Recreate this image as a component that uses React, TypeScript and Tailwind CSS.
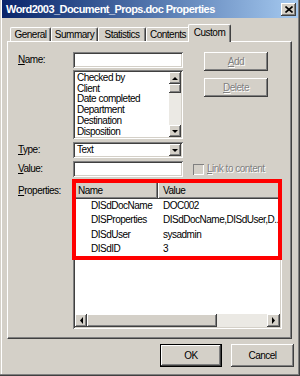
import React from "react";

const raised =
  "shadow-[inset_-1px_-1px_0_#404040,inset_1px_1px_0_#ffffff,inset_-2px_-2px_0_#808080,inset_2px_2px_0_#d4d0c8]";
const sunken =
  "shadow-[inset_1px_1px_0_#808080,inset_-1px_-1px_0_#ffffff,inset_2px_2px_0_#404040,inset_-2px_-2px_0_#d4d0c8]";

function Arrow({ dir, disabled }: { dir: "up" | "down" | "left" | "right"; disabled?: boolean }) {
  const pts: Record<string, string> = {
    up: "1,4 4,1 7,4",
    down: "1,1 7,1 4,4",
    left: "4,0 4,7 1,3.5",
    right: "1,0 1,7 4,3.5",
  };
  const w = dir === "up" || dir === "down" ? 8 : 5;
  const h = dir === "up" || dir === "down" ? 5 : 7;
  return (
    <svg width={w} height={h} viewBox={`0 0 ${w} ${h}`}>
      <polygon points={pts[dir]} fill={disabled ? "#808080" : "#000"} />
    </svg>
  );
}

function ScrollBtn({ dir, cls }: { dir: "up" | "down" | "left" | "right"; cls: string }) {
  return (
    <div className={`${cls} bg-[#d4d0c8] ${raised} flex items-center justify-center shrink-0`}>
      <Arrow dir={dir} />
    </div>
  );
}

function U({ children }: { children: React.ReactNode }) {
  return <span className="underline underline-offset-[1px]">{children}</span>;
}

const dis = "text-[#808080] [text-shadow:1px_1px_0_#ffffff]";

export default function App() {
  const items = ["Checked by", "Client", "Date completed", "Department", "Destination", "Disposition"];
  const props = [
    ["DISdDocName", "DOC002"],
    ["DISProperties", "DISdDocName,DISdUser,D.."],
    ["DISdUser", "sysadmin"],
    ["DISdID", "3"],
  ];
  return (
    <div
      className={`w-[300px] h-[376px] bg-[#d4d0c8] flex flex-col px-[2px] text-[10px] tracking-[-0.5px] leading-none text-black overflow-hidden shadow-[inset_-1px_-1px_0_#404040,inset_-2px_-2px_0_#808080,inset_1px_0_0_#d4d0c8,inset_2px_0_0_#ffffff]`}
      style={{ fontFamily: '"Liberation Sans", Arial, sans-serif' }}
    >
      {/* Title bar */}
      <div className="h-[18px] shrink-0 flex items-center bg-gradient-to-r from-[#0a246a] to-[#a6caf0] pl-[4px] pr-[2px]">
        <span className="text-white font-bold text-[11px] tracking-[-0.55px]">
          Word2003_Document_Props.doc Properties
        </span>
        <div className={`ml-auto w-[15px] h-[13px] bg-[#d4d0c8] ${raised} flex items-center justify-center`}>
          <svg width="8" height="7" viewBox="0 0 8 7">
            <path d="M0.5 0.5 L7.5 6.5 M7.5 0.5 L0.5 6.5" stroke="#000" strokeWidth="1.6" />
          </svg>
        </div>
      </div>

      {/* Tabs */}
      <div className="h-[23px] shrink-0 flex items-end pl-[8px] relative z-10">
        {[
          ["General", 41],
          ["Summary", 47],
          ["Statistics", 48],
          ["Contents", 44],
        ].map(([t, w]) => (
          <div
            key={t as string}
            style={{ width: w as number }}
            className="h-[14px] rounded-t-[2px] border-t border-l border-white border-r border-r-[#404040] shadow-[inset_-1px_0_0_#808080] flex items-center justify-center"
          >
            {t}
          </div>
        ))}
        <div className="w-[43px] h-[18px] -mb-px -ml-[2px] bg-[#d4d0c8] rounded-t-[2px] border-t border-l border-white border-r border-r-[#404040] shadow-[inset_-1px_0_0_#808080] flex items-center justify-center pb-[2px]">
          Custom
        </div>
      </div>

      {/* Panel */}
      <div className="ml-[5px] w-[285px] h-[298px] shrink-0 border border-t-white border-l-white border-r-[#404040] border-b-[#404040] shadow-[inset_-1px_-1px_0_#808080] pt-[10px] pl-[10px] flex flex-col">
        {/* Row 1 */}
        <div className="flex">
          <div className="w-[55px] h-[16px] flex items-center">
            <span><U>N</U>ame:</span>
          </div>
          <div className="w-[110px] flex flex-col">
            <div className={`h-[16px] bg-white ${sunken}`} />
            <div className={`mt-[2px] h-[69px] bg-white ${sunken} p-[2px] flex`}>
              <div className="flex-1 flex flex-col pl-[2px] pt-[0.5px]">
                {items.map((i) => (
                  <div key={i} className="h-[10.8px] flex items-center whitespace-nowrap">
                    {i}
                  </div>
                ))}
              </div>
              <div className="w-[12px] flex flex-col bg-[#ebe9e4]">
                <ScrollBtn dir="up" cls="h-[12px]" />
                <div className={`h-[9px] bg-[#d4d0c8] ${raised}`} />
                <div className="flex-1" />
                <ScrollBtn dir="down" cls="h-[12px]" />
              </div>
            </div>
          </div>
          <div className="ml-[21px] w-[64px] flex flex-col gap-[7px]">
            <div className={`h-[19px] bg-[#d4d0c8] ${raised} flex items-center justify-center ${dis}`}>
              <span><span className="underline">A</span>dd</span>
            </div>
            <div className={`h-[19px] bg-[#d4d0c8] ${raised} flex items-center justify-center ${dis}`}>
              <span><span className="underline">D</span>elete</span>
            </div>
          </div>
        </div>

        {/* Row Type */}
        <div className="flex mt-[3px]">
          <div className="w-[55px] h-[16px] flex items-center">
            <span><U>T</U>ype:</span>
          </div>
          <div className={`w-[110px] h-[16px] bg-white ${sunken} p-[2px] flex`}>
            <div className="flex-1 flex items-center pl-[2px]">Text</div>
            <ScrollBtn dir="down" cls="w-[12px] h-[12px]" />
          </div>
        </div>

        {/* Row Value */}
        <div className="flex mt-[3px]">
          <div className="w-[55px] h-[16px] flex items-center">
            <span><U>V</U>alue:</span>
          </div>
          <div className={`w-[110px] h-[16px] bg-white ${sunken}`} />
          <div className="ml-[10px] flex items-center gap-[3px]">
            <div className="w-[11px] h-[11px] bg-[#d4d0c8] shadow-[inset_1px_1px_0_#808080,inset_-1px_-1px_0_#ffffff]" />
            <span className={dis}>
              <span className="underline">L</span>ink to content
            </span>
          </div>
        </div>

        {/* Properties */}
        <div className="flex mt-[3px]">
          <div className="w-[55px] h-[20px] flex items-center pt-[2px]">
            <span><U>P</U>roperties:</span>
          </div>
          <div className={`relative w-[209px] h-[149px] bg-white ${sunken} p-[2px] flex flex-col`}>
            <div className="h-[17px] flex shrink-0">
              <div className={`w-[83px] bg-[#d4d0c8] ${raised} flex items-center pl-[3px]`}>Name</div>
              <div className={`flex-1 bg-[#d4d0c8] ${raised} flex items-center pl-[5px]`}>Value</div>
            </div>
            <div className="flex-1 flex flex-col">
              {props.map(([n, v]) => (
                <div key={n} className="h-[14.3px] flex items-center whitespace-nowrap">
                  <div className="w-[83px] pl-[16px]">{n}</div>
                  <div className="pl-[5px]">{v}</div>
                </div>
              ))}
            </div>
            <div className="h-[13px] flex shrink-0 bg-[#ebe9e4]">
              <ScrollBtn dir="left" cls="w-[12px]" />
              <div className={`w-[130px] bg-[#d4d0c8] ${raised}`} />
              <div className="flex-1" />
              <ScrollBtn dir="right" cls="w-[13px]" />
            </div>
            <div className="absolute left-[-1px] top-[-1px] w-[210px] h-[81px] border-[4px] border-[#ff0000]" />
          </div>
        </div>
      </div>

      {/* Buttons */}
      <div className="flex justify-end gap-[9px] pr-[4px] mt-[5px]">
        <div className="w-[62px] h-[23px] border border-black bg-[#d4d0c8] flex">
          <div className={`flex-1 ${raised} flex items-center justify-center`}>OK</div>
        </div>
        <div className={`w-[63px] h-[23px] bg-[#d4d0c8] ${raised} flex items-center justify-center`}>Cancel</div>
      </div>
    </div>
  );
}
